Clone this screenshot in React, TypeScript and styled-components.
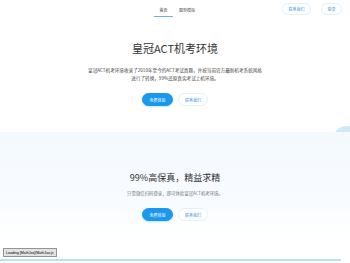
import React from "react";
import styled, { createGlobalStyle } from "styled-components";

const GlobalStyle = createGlobalStyle`
  html, body {
    margin: 0;
    padding: 0;
    background: #fff;
    font-family: "Noto Sans CJK SC", "Liberation Sans", sans-serif;
    overflow: hidden;
  }
`;

const Page = styled.div`
  position: relative;
  width: 350px;
  height: 263px;
  overflow: hidden;
`;

const Header = styled.header`
  display: flex;
  align-items: center;
  height: 20px;
  padding: 0 8px 0 154px;
`;

const NavLink = styled.a<{ $active?: boolean }>`
  position: relative;
  display: flex;
  align-items: center;
  justify-content: center;
  width: ${({ $active }) => ($active ? "19px" : "auto")};
  height: 20px;
  margin-right: 6px;
  font-size: 4px;
  color: ${({ $active }) => ($active ? "#333" : "#555")};
  text-decoration: none;
  &::after {
    content: "";
    display: ${({ $active }) => ($active ? "block" : "none")};
    position: absolute;
    left: 0;
    right: 0;
    bottom: 3px;
    height: 1px;
    background: #5fb4f5;
  }
`;

const Actions = styled.div`
  display: flex;
  gap: 10px;
  margin-left: auto;
  margin-top: -2px;
`;

const PillButton = styled.button<{ $primary?: boolean; $w: number; $small?: boolean }>`
  width: ${({ $w }) => $w}px;
  height: ${({ $small }) => ($small ? 12 : 13)}px;
  padding: 0;
  border-radius: 7px;
  font-family: inherit;
  font-size: 4px;
  line-height: 1;
  cursor: pointer;
  color: ${({ $primary }) => ($primary ? "#fff" : "#3a97e6")};
  background: ${({ $primary }) => ($primary ? "#1a98ec" : "#fff")};
  border: 0.7px solid ${({ $primary }) => ($primary ? "#1a98ec" : "#e2f0fc")};
  box-shadow: ${({ $primary }) => ($primary ? "0 1px 2px rgba(26,152,236,0.25)" : "none")};
`;

const Hero = styled.section`
  display: flex;
  flex-direction: column;
  align-items: center;
  padding: 21px 0 26px;
`;

const Title = styled.h1`
  margin: 0;
  font-size: 11px;
  line-height: 14px;
  font-weight: 400;
  color: #333;
`;

const Lead = styled.p`
  margin: 11px 0 0;
  font-size: 4.6px;
  line-height: 8px;
  color: #444;
  text-align: center;
  white-space: nowrap;
`;

const ButtonRow = styled.div`
  display: flex;
  gap: 5px;
  margin-top: 11px;
`;

const Feature = styled.section`
  position: relative;
  display: flex;
  flex-direction: column;
  align-items: center;
  height: 108px;
  padding-top: 40px;
  box-sizing: border-box;
  background: linear-gradient(#f4f9fe 0%, #f7fbff 60%, #ffffff 100%);
`;

const Bubble = styled.div`
  position: absolute;
  right: -12px;
  top: 126px;
  width: 30px;
  height: 30px;
  border-radius: 50%;
  background: #cfe9fb;
  z-index: 0;
`;

const FeatureTitle = styled.h2`
  position: relative;
  margin: 0;
  font-size: 9px;
  line-height: 12px;
  font-weight: 400;
  color: #333;
`;

const FeatureText = styled.p`
  margin: 5px 0 0;
  font-size: 4.4px;
  line-height: 8px;
  color: #777;
`;

const Divider = styled.div`
  width: 341px;
  height: 2px;
  margin-top: 19px;
  background: #b4e2f7;
`;

const Loading = styled.div`
  position: absolute;
  left: 3px;
  bottom: 6px;
  height: 7px;
  padding: 0 2px;
  display: flex;
  align-items: center;
  font-family: "Liberation Sans", sans-serif;
  font-size: 3.6px;
  color: #000;
  background: #e4e4e4;
  border: 0.6px solid #959595;
  z-index: 2;
`;

export default function App() {
  return (
    <Page>
      <GlobalStyle />
      <Header>
        <NavLink $active>首页</NavLink>
        <NavLink>题型模拟</NavLink>
        <Actions>
          <PillButton $w={29} $small>联系我们</PillButton>
          <PillButton $w={21} $small>登录</PillButton>
        </Actions>
      </Header>
      <Hero>
        <Title>皇冠ACT机考环境</Title>
        <Lead>
          皇冠ACT机考环境收录了2010年至今的ACT考试真题，并按当前官方最新机考系统风格
          <br />
          进行了转换，99%还原真实考试上机环境。
        </Lead>
        <ButtonRow>
          <PillButton $primary $w={31}>免费体验</PillButton>
          <PillButton $w={30}>联系我们</PillButton>
        </ButtonRow>
      </Hero>
      <Bubble />
      <Feature>
        <FeatureTitle>99%高保真，精益求精</FeatureTitle>
        <FeatureText>只需微信扫码登录，即可体验皇冠ACT机考环境。</FeatureText>
        <ButtonRow>
          <PillButton $primary $w={31}>免费体验</PillButton>
          <PillButton $w={30}>联系我们</PillButton>
        </ButtonRow>
      </Feature>
      <Divider />
      <Loading>Loading [MathJax]/MathJax.js</Loading>
    </Page>
  );
}
